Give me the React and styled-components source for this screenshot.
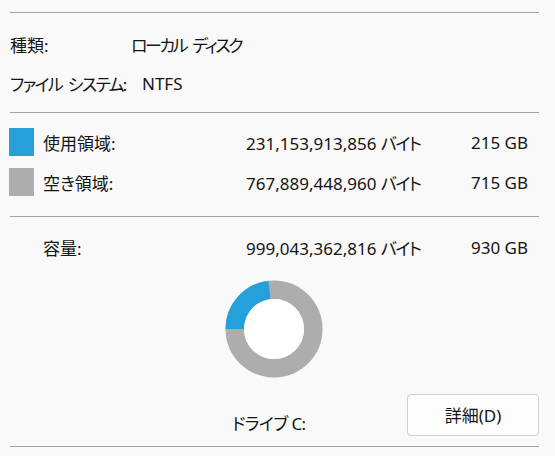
import React from 'react'
import styled, { createGlobalStyle } from 'styled-components'

const GlobalStyle = createGlobalStyle`
  html, body {
    margin: 0;
    padding: 0;
    background: #f9f9f9;
  }
  body {
    font-family: "Noto Sans", "Noto Sans CJK JP", sans-serif;
    font-size: 17px;
    color: #141414;
    font-feature-settings: "palt";
  }
`

const Page = styled.div`
  width: 555px;
  height: 456px;
  box-sizing: border-box;
  padding: 12px 16px 0 10px;
  overflow: hidden;
`

const Divider = styled.div`
  height: 1px;
  background: #a3a3a3;
`

const InfoSection = styled.div`
  padding: 12px 0 9px;
`

const InfoRow = styled.div`
  display: grid;
  grid-template-columns: ${({ $labelWidth }) => $labelWidth}px auto;
  align-items: center;
  height: 39px;
`

const UsageSection = styled.div`
  display: flex;
  flex-direction: column;
  gap: 12px;
  padding: ${({ $top }) => $top}px 0 ${({ $bottom }) => $bottom}px;
`

const UsageRow = styled.div`
  display: grid;
  grid-template-columns: 34px 203px auto 1fr;
  align-items: center;
  height: 28px;
  margin-left: -1px;
  padding-right: 11px;
`

const Swatch = styled.div`
  width: 25px;
  height: 28px;
  background: ${({ $color }) => $color};
`

const Text = styled.span`
  white-space: nowrap;
  letter-spacing: ${({ $tracking = 0 }) => $tracking}px;
  word-spacing: ${({ $wordGap = 0 }) => $wordGap}px;
`

const Amount = styled.span`
  text-align: right;
  white-space: nowrap;
`

const ChartArea = styled.div`
  display: flex;
  justify-content: center;
  width: 527px;
  margin-top: 19px;
`

const Footer = styled.div`
  display: flex;
  align-items: flex-end;
  justify-content: space-between;
  margin-top: 16px;
  padding-left: 222px;
  padding-bottom: 10px;
`

const DriveLabel = styled.span`
  line-height: 20px;
  margin-bottom: 2px;
  letter-spacing: -0.6px;
`

const Button = styled.button`
  width: 132px;
  height: 42px;
  box-sizing: border-box;
  border: 1px solid #d0d0d0;
  border-radius: 4px;
  background: #fdfdfd;
  font: inherit;
  color: #141414;
  padding: 0 0 2px;
`

const usage = [
  { label: '使用領域:', bytes: '231,153,913,856', size: '215 GB', color: '#26a0da' },
  { label: '空き領域:', bytes: '767,889,448,960', size: '715 GB', color: '#adadad' }
]

function Donut ({ used, total }) {
  const r = 39.25
  const c = 2 * Math.PI * r
  const part = (used / total) * c
  return (
    <svg width='98' height='98' viewBox='0 0 98 98'>
      <circle cx='49' cy='49' r={r} fill='none' stroke='#adadad' strokeWidth='18.5' />
      <circle
        cx='49'
        cy='49'
        r={r}
        fill='none'
        stroke='#26a0da'
        strokeWidth='18.5'
        strokeDasharray={`${part} ${c}`}
        transform='rotate(180 49 49)'
      />
      <circle cx='49' cy='49' r='30' fill='#ffffff' />
    </svg>
  )
}

function Bytes ({ value }) {
  return (
    <Text>
      {value} <Text $tracking={-1.5}>バイト</Text>
    </Text>
  )
}

export default function App () {
  return (
    <Page>
      <GlobalStyle />
      <Divider />
      <InfoSection>
        <InfoRow $labelWidth={121}>
          <Text>種類:</Text>
          <Text $tracking={-2.4} $wordGap={4}>ローカル ディスク</Text>
        </InfoRow>
        <InfoRow $labelWidth={132}>
          <Text $tracking={-1.7} $wordGap={3}>ファイル システム:</Text>
          <Text>NTFS</Text>
        </InfoRow>
      </InfoSection>
      <Divider />
      <UsageSection $top={15} $bottom={20}>
        {usage.map(({ label, bytes, size, color }) => (
          <UsageRow key={label}>
            <Swatch $color={color} />
            <Text>{label}</Text>
            <Bytes value={bytes} />
            <Amount>{size}</Amount>
          </UsageRow>
        ))}
      </UsageSection>
      <Divider />
      <UsageSection $top={16} $bottom={0}>
        <UsageRow>
          <span />
          <Text>容量:</Text>
          <Bytes value='999,043,362,816' />
          <Amount>930 GB</Amount>
        </UsageRow>
      </UsageSection>
      <ChartArea>
        <Donut used={215} total={930} />
      </ChartArea>
      <Footer>
        <DriveLabel>ドライブ C:</DriveLabel>
        <Button>詳細(D)</Button>
      </Footer>
      <Divider />
    </Page>
  )
}
